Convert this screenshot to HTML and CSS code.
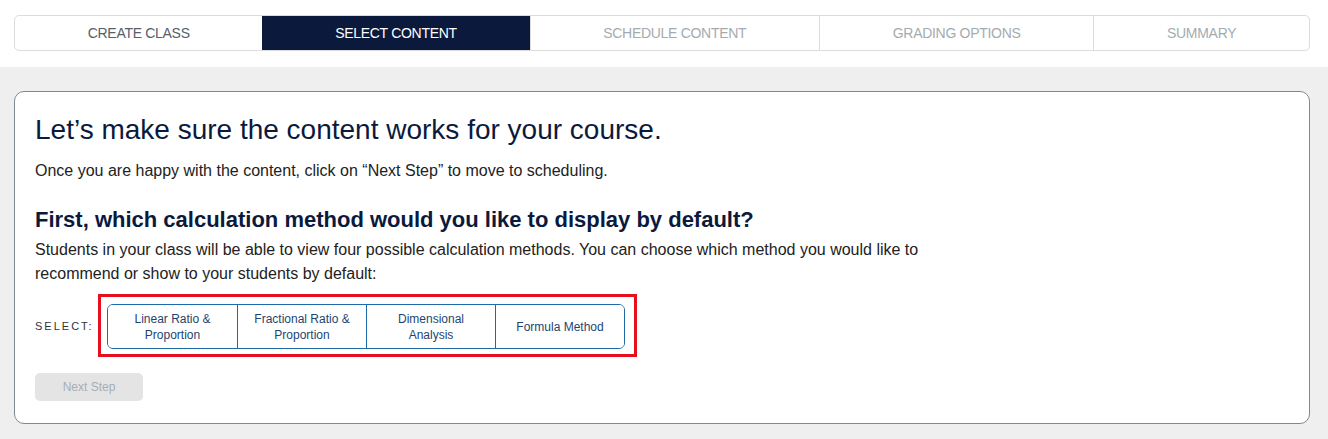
FILE: index.html
```html
<!DOCTYPE html>
<html lang="en">
<head>
    <meta charset="UTF-8">
    <meta name="viewport" content="width=device-width, initial-scale=1.0">
    <title>Select Content</title>
    <link rel="stylesheet" href="styles.css">
</head>
<body>
    <div class="topbar">
        <ol class="steps">
            <li class="step done">CREATE CLASS</li>
            <li class="step active">SELECT CONTENT</li>
            <li class="step">SCHEDULE CONTENT</li>
            <li class="step">GRADING OPTIONS</li>
            <li class="step">SUMMARY</li>
        </ol>
    </div>

    <div class="page">
        <div class="card">
            <h1>Let’s make sure the content works for your course.</h1>
            <p class="intro">Once you are happy with the content, click on “Next Step” to move to scheduling.</p>

            <h2>First, which calculation method would you like to display by default?</h2>
            <p class="desc">Students in your class will be able to view four possible calculation methods. You can choose which method you would like to recommend or show to your students by default:</p>

            <div class="select-row">
                <span class="select-label">SELECT:</span>
                <div class="highlight">
                    <div class="method-group">
                        <button class="method">Linear Ratio &amp;<br>Proportion</button>
                        <button class="method">Fractional Ratio &amp;<br>Proportion</button>
                        <button class="method">Dimensional<br>Analysis</button>
                        <button class="method">Formula Method</button>
                    </div>
                </div>
            </div>

            <button class="next-btn" disabled>Next Step</button>
        </div>
    </div>
</body>
</html>
```

FILE: styles.css
```css
* {
    margin: 0;
    padding: 0;
    box-sizing: border-box;
}

body {
    font-family: 'Liberation Sans', Arial, sans-serif;
    background: #efefef;
    color: #222;
}

/* stepper across the top */
.topbar {
    background: #fff;
    padding: 15px 18px 16px 14px;
}

.steps {
    list-style: none;
    display: flex;
    height: 36px;
    border: 1px solid #dcdcdc;
    border-radius: 5px;
    overflow: hidden;
}

.step {
    flex: 1 1 auto;
    display: flex;
    align-items: center;
    justify-content: center;
    font-size: 14px;
    color: #a4abb0;
    border-left: 1px solid #dcdcdc;
    letter-spacing: -0.3px;
}

.step:first-child {
    border-left: none;
}

.step.done {
    color: #56616a;
}

.step.active {
    background: #0b1a3c;
    color: #fff;
    border-left: none;
    margin: -1px 0;
}

/* main content */
.page {
    padding: 24px 18px 16px 14px;
}

.card {
    background: #fff;
    border: 1px solid #7d8a95;
    border-radius: 10px;
    padding: 22px 20px 22px 20px;
}

h1 {
    font-size: 28px;
    font-weight: 400;
    color: #0b1a3c;
    line-height: 32px;
}

.intro {
    font-size: 16px;
    margin-top: 14px;
    line-height: 22px;
}

h2 {
    font-size: 22px;
    font-weight: 700;
    color: #0b1a3c;
    margin-top: 26px;
    line-height: 24px;
}

.desc {
    font-size: 16px;
    line-height: 24px;
    margin-top: 6px;
    max-width: 900px;
}

.select-row {
    display: flex;
    align-items: center;
    margin-top: 8px;
}

.select-label {
    font-size: 11px;
    letter-spacing: 2px;
    color: #333;
    width: 63px;
}

.highlight {
    border: 3px solid #e60f1e;
    padding: 7px 9px 5px 6px;
}

.method-group {
    display: flex;
    border: 1px solid #1e6aa8;
    border-radius: 6px;
    overflow: hidden;
}

.method {
    width: 129px;
    height: 43px;
    background: #fff;
    border: none;
    border-left: 1px solid #1e6aa8;
    font-family: inherit;
    font-size: 12px;
    line-height: 16px;
    color: #1d4570;
}

.method:first-child {
    border-left: none;
}

.next-btn {
    display: block;
    margin-top: 16px;
    width: 108px;
    height: 28px;
    background: #e4e4e4;
    border: none;
    border-radius: 5px;
    color: #a5aeb4;
    font-family: inherit;
    font-size: 12px;
}
```
